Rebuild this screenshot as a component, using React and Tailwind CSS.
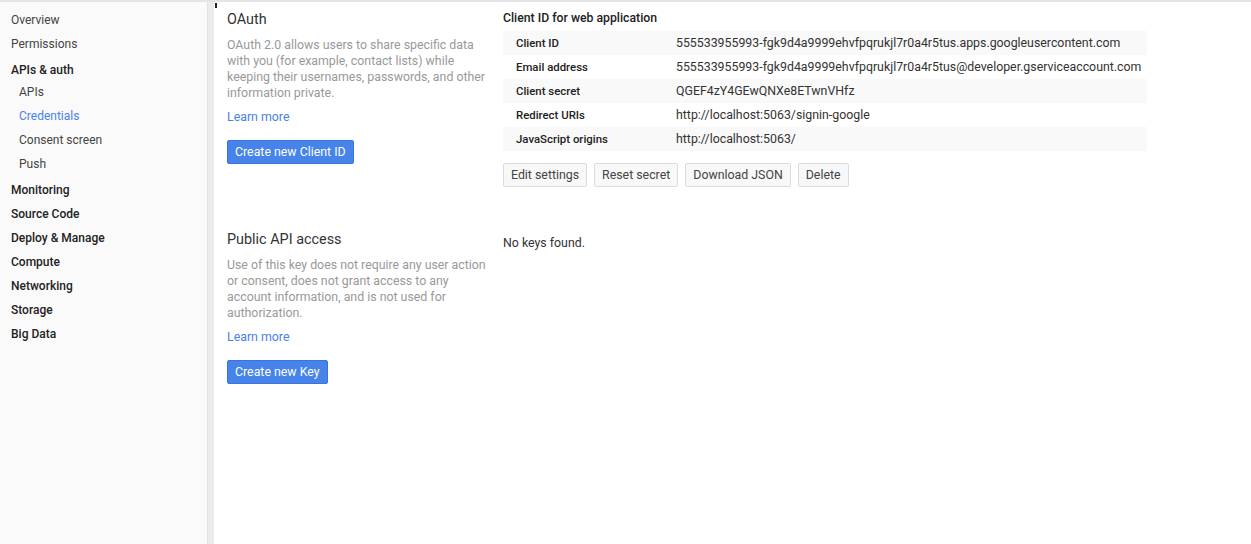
import React from "react";

const navTop = "h-[24px] pl-[11px] leading-[24px] text-[#444]";
const navBold = "h-[24px] pl-[11px] pt-[4px] leading-[20px] font-medium text-[#222]";
const navSub = "h-[24px] pl-[19px] leading-[24px] text-[#444]";

const rows = [
  ["Client ID", "555533955993-fgk9d4a9999ehvfpqrukjl7r0a4r5tus.apps.googleusercontent.com"],
  ["Email address", "555533955993-fgk9d4a9999ehvfpqrukjl7r0a4r5tus@developer.gserviceaccount.com"],
  ["Client secret", "QGEF4zY4GEwQNXe8ETwnVHfz"],
  ["Redirect URIs", "http://localhost:5063/signin-google"],
  ["JavaScript origins", "http://localhost:5063/"],
];

function BlueButton({ children }) {
  return (
    <button className="h-[24px] px-[7px] bg-[#4683ea] border border-[#3b74d6] rounded-[2px] text-white text-[12.35px] leading-[22px]">
      {children}
    </button>
  );
}

function GrayButton({ children }) {
  return (
    <button className="h-[24px] px-[7px] bg-[#f8f8f8] border border-[#dcdcdc] rounded-[2px] text-[#444] text-[12.35px] leading-[22px]">
      {children}
    </button>
  );
}

export default function App() {
  return (
    <div className="w-[1251px] h-[544px] flex flex-col bg-white text-[12.35px] overflow-hidden" style={{ fontFamily: "Roboto, 'Liberation Sans', sans-serif" }}>
      <div className="h-[2px] bg-[#e5e5e5]" />
      <div className="flex flex-1">
        <nav className="w-[207px] bg-[#fafafa] pt-[6px] text-[12px]">
          <div className={navTop}>Overview</div>
          <div className={navTop}>Permissions</div>
          <div className={navBold}>APIs &amp; auth</div>
          <div className={navSub}>APIs</div>
          <div className={navSub + " !text-[#4a80ee]"}>Credentials</div>
          <div className={navSub}>Consent screen</div>
          <div className={navSub}>Push</div>
          <div className={navBold}>Monitoring</div>
          <div className={navBold}>Source Code</div>
          <div className={navBold}>Deploy &amp; Manage</div>
          <div className={navBold}>Compute</div>
          <div className={navBold}>Networking</div>
          <div className={navBold}>Storage</div>
          <div className={navBold}>Big Data</div>
        </nav>
        <div className="w-[7px] bg-[#ebebeb] border-l border-[#e2e2e2]" />
        <main className="flex-1 relative pl-[13px]">
          <div className="absolute left-[1px] top-[1px] w-[2px] h-[5px] bg-[#222]" />
          <section className="grid grid-cols-[276px_1fr]">
            <div className="pt-[8px] w-[262px]">
              <h2 className="text-[14.4px] leading-[20px] text-[#333]">OAuth</h2>
              <p className="mt-[7px] leading-[16px] text-[#999]">
                OAuth 2.0 allows users to share specific data with you (for example, contact lists) while keeping their usernames, passwords, and other information private.
              </p>
              <div className="mt-[8px] leading-[16px] text-[#4a80ee]">Learn more</div>
              <div className="mt-[15px]">
                <BlueButton>Create new Client ID</BlueButton>
              </div>
            </div>
            <div className="pt-[8px]">
              <h3 className="text-[12.25px] leading-[16px] font-medium text-[#222]">Client ID for web application</h3>
              <div className="mt-[5px] w-[644px]">
                {rows.map(([k, v], i) => (
                  <div key={k} className={"h-[24px] flex items-center " + (i % 2 === 0 ? "bg-[#f9f9f9]" : "bg-white")}>
                    <div className="w-[173px] shrink-0 pl-[13px] pt-[1px] text-[11.4px] font-medium text-[#222]">{k}</div>
                    <div className="whitespace-nowrap text-[#333]">{v}</div>
                  </div>
                ))}
              </div>
              <div className="mt-[12px] flex gap-[7px]">
                <GrayButton>Edit settings</GrayButton>
                <GrayButton>Reset secret</GrayButton>
                <GrayButton>Download JSON</GrayButton>
                <GrayButton>Delete</GrayButton>
              </div>
            </div>
          </section>
          <section className="grid grid-cols-[276px_1fr] mt-[43px]">
            <div className="w-[262px]">
              <h2 className="text-[14.4px] leading-[20px] text-[#333]">Public API access</h2>
              <p className="mt-[7px] leading-[16px] text-[#999]">
                Use of this key does not require any user action or consent, does not grant access to any account information, and is not used for authorization.
              </p>
              <div className="mt-[8px] leading-[16px] text-[#4a80ee]">Learn more</div>
              <div className="mt-[15px]">
                <BlueButton>Create new Key</BlueButton>
              </div>
            </div>
            <div className="pt-[5px] leading-[16px] text-[#333]">No keys found.</div>
          </section>
        </main>
      </div>
    </div>
  );
}
